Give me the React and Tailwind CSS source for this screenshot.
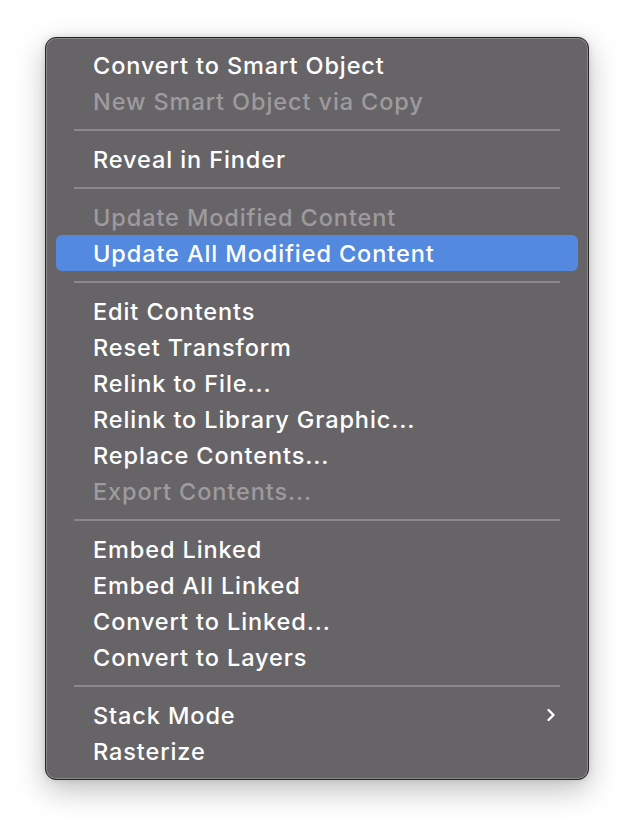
import React from 'react';

const groups = [
  [
    { label: 'Convert to Smart Object' },
    { label: 'New Smart Object via Copy', disabled: true },
  ],
  [{ label: 'Reveal in Finder' }],
  [
    { label: 'Update Modified Content', disabled: true },
    { label: 'Update All Modified Content', active: true },
  ],
  [
    { label: 'Edit Contents' },
    { label: 'Reset Transform' },
    { label: 'Relink to File...' },
    { label: 'Relink to Library Graphic...' },
    { label: 'Replace Contents...' },
    { label: 'Export Contents...', disabled: true },
  ],
  [
    { label: 'Embed Linked' },
    { label: 'Embed All Linked' },
    { label: 'Convert to Linked...' },
    { label: 'Convert to Layers' },
  ],
  [{ label: 'Stack Mode', submenu: true }, { label: 'Rasterize' }],
];

const MenuItem = ({ item }) => {
  let cls = 'text-white';
  if (item.disabled) cls = 'text-[#9d9b9e]';
  return (
    <div
      className={`mx-[10px] h-9 rounded-[6px] pl-[37px] pr-[22px] flex items-center justify-between ${
        item.active ? 'bg-[#5389de]' : ''
      } ${cls}`}
    >
      <span className="pt-[1px]">{item.label}</span>
      {item.submenu && (
        <svg width="10" height="14" viewBox="0 0 10 14">
          <path d="M2.5 2 L7.5 7 L2.5 12" fill="none" stroke="white" strokeWidth="2.4" strokeLinecap="round" strokeLinejoin="round" />
        </svg>
      )}
    </div>
  );
};

const App = () => {
  return (
    <div className="min-h-[834px] bg-white pt-[37px] pl-[45px]">
      <div
        className="w-[544px] h-[743px] rounded-[11px] bg-[#676468] border border-[#262426] pt-[9px] pb-[10px] text-[23.5px] font-medium tracking-[0.9px] shadow-[inset_0_0_0_1px_#8a878b,0_10px_30px_rgba(0,0,0,0.25),0_0_6px_rgba(0,0,0,0.12)]"
        style={{ fontFamily: 'Inter, "Noto Sans", sans-serif' }}
      >
        {groups.map((g, gi) => (
          <div key={gi}>
            {gi > 0 && (
              <div className="h-[22px] flex items-center px-[28px]">
                <div className="w-full h-[2px] bg-[#8a888b]" />
              </div>
            )}
            {g.map((item, i) => (
              <MenuItem key={i} item={item} />
            ))}
          </div>
        ))}
      </div>
    </div>
  );
};

export default App;
